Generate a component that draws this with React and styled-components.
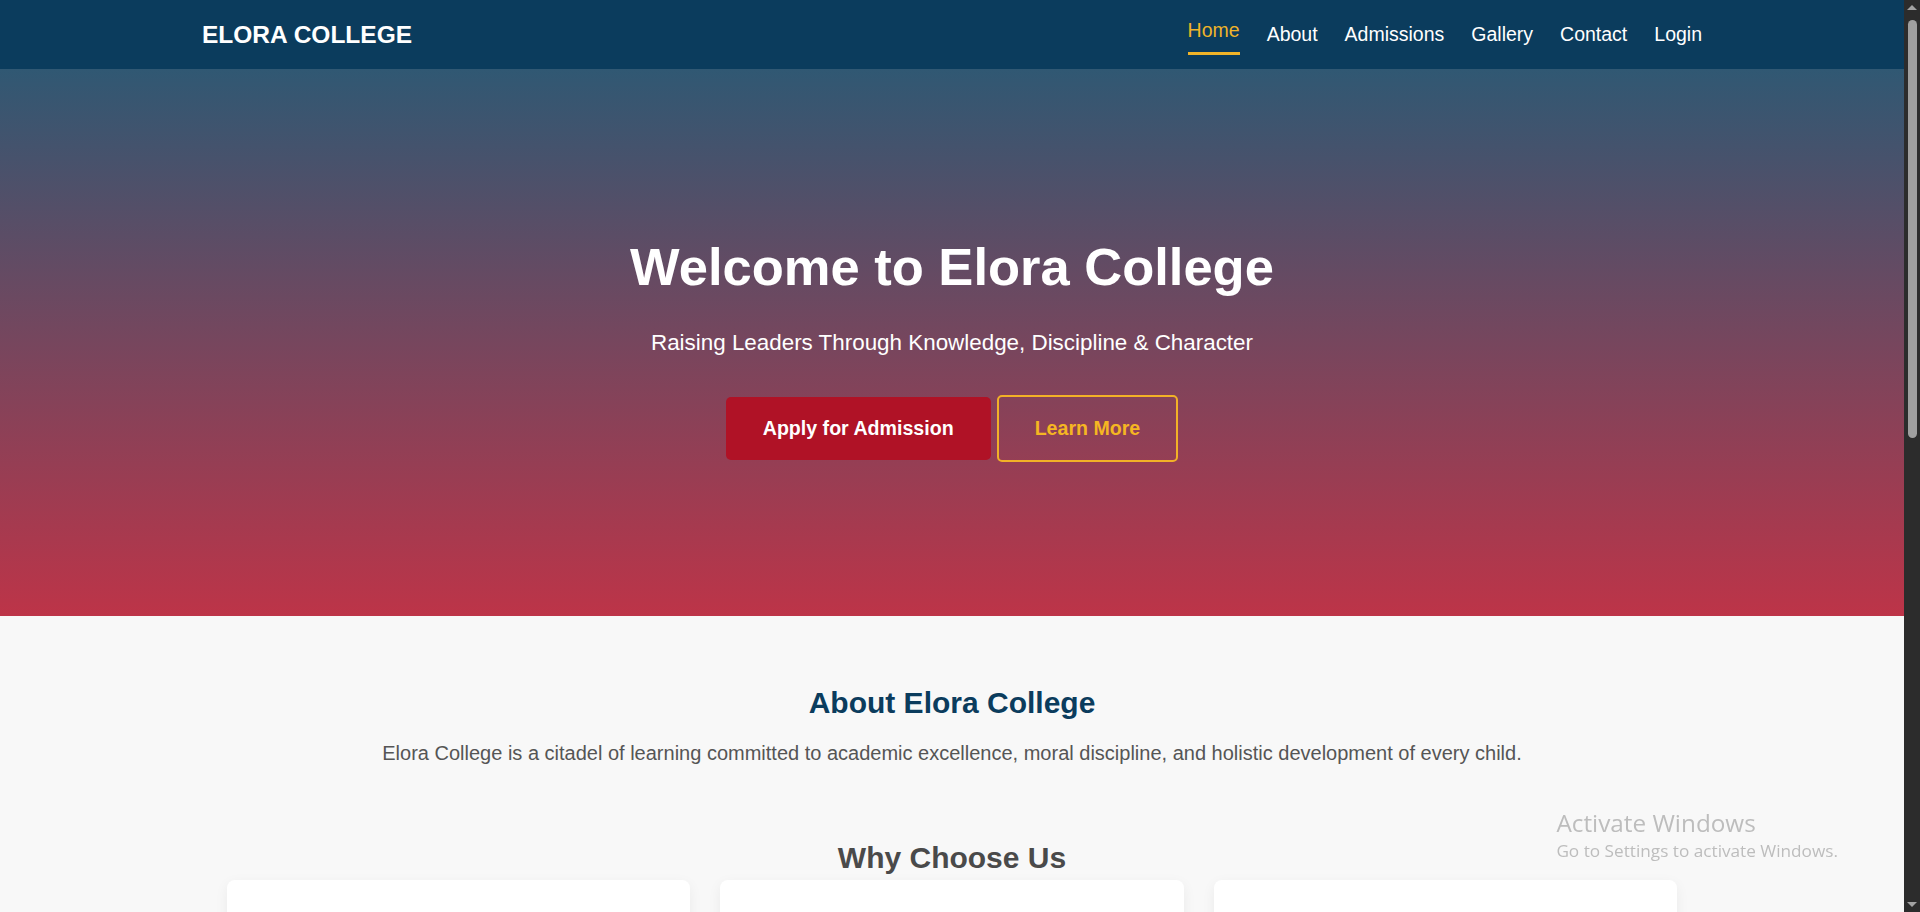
import styled, { createGlobalStyle } from 'styled-components';

const GlobalStyle = createGlobalStyle`
  * { box-sizing: border-box; }
  html, body { margin: 0; padding: 0; }
  body {
    font-family: "Liberation Sans", Arial, sans-serif;
    background: #f8f8f8;
    color: #333;
  }
`;

const Page = styled.div`
  margin-right: 16px;
`;

const Header = styled.header`
  background: #0b3c5d;
  height: 69px;
`;
const Bar = styled.div`
  max-width: 1500px;
  height: 100%;
  margin: 0 auto;
  display: flex;
  align-items: center;
  justify-content: space-between;
`;
const Logo = styled.div`
  color: #fff;
  font-size: 24.5px;
  font-weight: 700;
`;
const Nav = styled.nav`
  display: flex;
  align-items: center;
  gap: 27px;
`;
const NavLink = styled.a`
  position: relative;
  color: ${({ active }) => (active ? '#f0b429' : '#fff')};
  font-size: 19.5px;
  text-decoration: none;
  transform: ${({ active }) => (active ? 'translateY(-4px)' : 'none')};
  &::after {
    content: '';
    display: ${({ active }) => (active ? 'block' : 'none')};
    position: absolute;
    left: 0;
    right: 0;
    bottom: -13px;
    height: 3px;
    background: #f0b429;
  }
`;

const Hero = styled.section`
  height: 547px;
  background: linear-gradient(to bottom, #305873, #bd3448);
  display: flex;
  flex-direction: column;
  align-items: center;
  padding-top: 167px;
  color: #fff;
  text-align: center;
`;
const Title = styled.h1`
  font-size: 52.5px;
  font-weight: 700;
  margin: 0 0 33px;
`;
const Tagline = styled.p`
  font-size: 22.4px;
  margin: 0 0 39px;
`;
const Actions = styled.div`
  display: flex;
  align-items: center;
  gap: 6px;
`;
const Button = styled.a`
  font-size: 19.6px;
  font-weight: 700;
  text-decoration: none;
  padding: 20px ${({ outline }) => (outline ? '36px' : '37px')};
  border-radius: 5px;
  background: ${({ outline }) => (outline ? 'transparent' : '#b01226')};
  color: ${({ outline }) => (outline ? '#f5b622' : '#fff')};
  border: ${({ outline }) => (outline ? '2px solid #f2b127' : 'none')};
`;

const Section = styled.section`
  max-width: 1500px;
  margin: 0 auto;
  padding: 70px 25px 80px;
  text-align: center;
`;
const Heading = styled.h2`
  font-size: 30px;
  font-weight: 700;
  color: ${({ muted }) => (muted ? '#4a4a4a' : '#0b3c5d')};
  margin: 0 0 ${({ tight }) => (tight ? '5px' : '22px')};
`;
const Lead = styled.p`
  font-size: 20px;
  color: #555;
  margin: 0 0 76px;
`;
const Cards = styled.div`
  display: grid;
  grid-template-columns: repeat(3, 1fr);
  gap: 30px;
`;
const Card = styled.div`
  background: #fff;
  border-radius: 8px;
  box-shadow: 0 4px 14px rgba(0, 0, 0, 0.06);
  padding: 36px 30px;
  text-align: center;
`;
const CardTitle = styled.h3`
  font-size: 22px;
  color: #0b3c5d;
  margin: 0 0 14px;
`;
const CardText = styled.p`
  font-size: 17px;
  line-height: 1.5;
  color: #555;
  margin: 0;
`;

const Band = styled.section`
  background: #0b3c5d;
  color: #fff;
  text-align: center;
  padding: 70px 20px;
`;
const BandTitle = styled.h2`
  font-size: 30px;
  margin: 0 0 16px;
`;
const BandText = styled.p`
  font-size: 19px;
  margin: 0 0 30px;
`;
const Footer = styled.footer`
  background: #082b43;
  color: #cfd8df;
  text-align: center;
  font-size: 16px;
  padding: 40px 20px;
  min-height: 200px;
`;

const Watermark = styled.div`
  position: fixed;
  right: 82px;
  bottom: 50px;
  font-family: "Open Sans", "Noto Sans", sans-serif;
  color: #bdbdbd;
  pointer-events: none;
`;
const WatermarkTitle = styled.div`
  font-size: 24.3px;
  line-height: 1.2;
`;
const WatermarkText = styled.div`
  font-size: 17.2px;
  margin-top: 2px;
`;

const Scrollbar = styled.div`
  position: fixed;
  top: 0;
  right: 0;
  width: 16px;
  height: 100vh;
  background: #2c2c2c;
  display: flex;
  flex-direction: column;
  align-items: center;
  justify-content: space-between;
  padding: 4px 0;
`;
const Track = styled.div`
  flex: 1;
  width: 100%;
  display: flex;
  justify-content: center;
  padding-top: 9px;
`;
const Thumb = styled.div`
  width: 9px;
  height: 418px;
  border-radius: 5px;
  background: #9f9f9f;
`;

const Arrow = ({ down }) => (
  <svg width="10" height="7" viewBox="0 0 10 7">
    <path d={down ? 'M0 1 L10 1 L5 6 Z' : 'M0 6 L10 6 L5 1 Z'} fill="#a3a3a3" />
  </svg>
);

const links = ['Home', 'About', 'Admissions', 'Gallery', 'Contact', 'Login'];

const reasons = [
  { title: 'Qualified Teachers', text: 'Experienced and dedicated staff who bring out the best in every student.' },
  { title: 'Modern Facilities', text: 'Well equipped laboratories, library and ICT centre for practical learning.' },
  { title: 'Moral Training', text: 'A disciplined environment that builds integrity, respect and good character.' },
];

export default function App() {
  return (
    <>
      <GlobalStyle />
      <Page>
        <Header>
          <Bar>
            <Logo>ELORA COLLEGE</Logo>
            <Nav>
              {links.map((l) => (
                <NavLink key={l} href="#" active={l === 'Home' ? 1 : 0}>{l}</NavLink>
              ))}
            </Nav>
          </Bar>
        </Header>
        <Hero>
          <Title>Welcome to Elora College</Title>
          <Tagline>Raising Leaders Through Knowledge, Discipline &amp; Character</Tagline>
          <Actions>
            <Button href="#">Apply for Admission</Button>
            <Button href="#" outline={1}>Learn More</Button>
          </Actions>
        </Hero>
        <Section>
          <Heading>About Elora College</Heading>
          <Lead>
            Elora College is a citadel of learning committed to academic excellence, moral discipline, and holistic development of every child.
          </Lead>
          <Heading muted tight>Why Choose Us</Heading>
          <Cards>
            {reasons.map((r) => (
              <Card key={r.title}>
                <CardTitle>{r.title}</CardTitle>
                <CardText>{r.text}</CardText>
              </Card>
            ))}
          </Cards>
        </Section>
        <Band>
          <BandTitle>Admissions Are Open</BandTitle>
          <BandText>Give your child the foundation for a bright future.</BandText>
          <Button href="#">Apply for Admission</Button>
        </Band>
        <Footer>© 2025 Elora College. All rights reserved.</Footer>
      </Page>
      <Watermark>
        <WatermarkTitle>Activate Windows</WatermarkTitle>
        <WatermarkText>Go to Settings to activate Windows.</WatermarkText>
      </Watermark>
      <Scrollbar>
        <Arrow />
        <Track>
          <Thumb />
        </Track>
        <Arrow down />
      </Scrollbar>
    </>
  );
}
